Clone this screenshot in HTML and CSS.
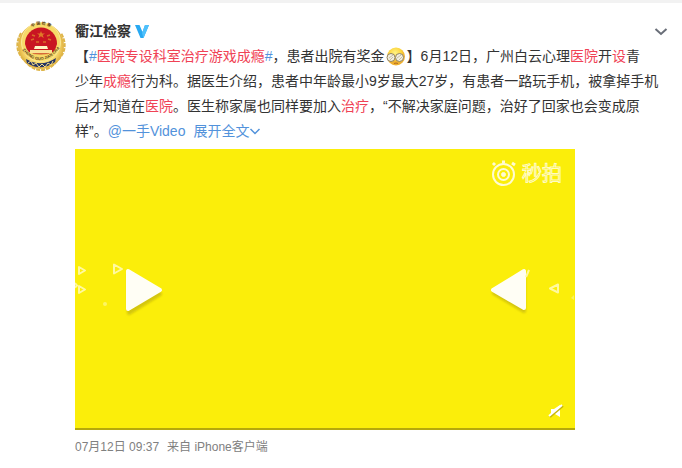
FILE: index.html
```html
<!DOCTYPE html>
<html lang="zh-CN">
<head>
<meta charset="utf-8">
<meta name="viewport" content="width=device-width, initial-scale=1">
<title>衢江检察</title>
<link rel="stylesheet" href="styles.css">
</head>
<body>
<article class="post">
  <a class="avatar" href="#" aria-label="衢江检察">
    <svg viewBox="0 0 50 50" width="50" height="50">
      <defs>
        <radialGradient id="gold"><stop offset="0.75" stop-color="#f8dc70"/><stop offset="1" stop-color="#e0b040"/></radialGradient>
        <path id="arc-top" d="M8.500 20a16.500 16.500 0 0 1 33 0"/>
        <path id="arc-bottom" d="M7 30Q25 49 43 28"/>
      </defs>
      <circle cx="25" cy="25" r="23" fill="url(#gold)"/>
      <path d="M5 12Q-4 28 9 40Q16 49 25 49Q34 49 41 40Q54 28 45 12" fill="none" stroke="#deb548" stroke-width="2" stroke-dasharray="4 1"/>
      <circle cx="25" cy="21" r="19.500" fill="#f7d968" stroke="#fbe996"/>
      <path d="M10 38q15 9 30-1l-1 4q-14 10-28 1z" fill="#243366"/>
      <path d="M12 42l3-2 2 4 3-2 3 4 3-3 3 3 3-4 3 2 2-4" fill="none" stroke="#f4dc83"/>
      <path d="M9 23a16 16.500 0 1 1 32 0q-1 5-4 8-12 5-24 0-3-3-4-8z" fill="#c91522"/>
      <path d="M25 10l1 2.500h3l-2.300 1.600 1 2.900-2.700-1.800-2.700 1.800 1-2.900L21 12.500h3z" fill="#e07b28"/>
      <path d="M16 14l3 1M15 19l3-1M31 15l3-1M32 18l3 1M20 21h3M27 21h3" stroke="#d96c29" stroke-width="1.500"/>
      <path d="M19 25h12l1 3H18z" fill="#fff4c4"/>
      <path d="M14 29h22v3H14z" fill="#f9e394"/>
      <path d="M18 33h14" stroke="#e4bb50"/>
      <text class="seal-name"><textPath href="#arc-top" startOffset="50%" text-anchor="middle">中 国 检 察</textPath></text>
      <text class="seal-latin"><textPath href="#arc-bottom" startOffset="50%" text-anchor="middle">ZHONG GUO JIAN CHA</textPath></text>
    </svg>
  </a>
  <div class="body">
    <header class="head">
      <a class="name" href="#">衢江检察</a>
      <svg class="badge" viewBox="0 0 14 13" width="14" height="13" aria-hidden="true"><path d="M0 0h4.500l3 7L10 0h4L8.500 13H5.500z" fill="#28a9f2"/><path d="M10 0h4L8.500 13 7 8z" fill="#4fc0fb"/></svg>
      <button class="more" type="button" aria-label="更多"><svg viewBox="0 0 14 8" width="14" height="8"><path d="M1.500 1l5.500 5 5.500-5" fill="none" stroke="#696e78" stroke-width="2"/></svg></button>
    </header>
    <p class="text">【<a href="#">#<em>医院专设科室治疗游戏成瘾</em>#</a>，患者出院有奖金<svg class="emoji" viewBox="0 0 22 22" width="22" height="22" aria-hidden="true"><defs><radialGradient id="face" cx="0.450" cy="0.300"><stop offset="0" stop-color="#fff384"/><stop offset="0.700" stop-color="#fcd43b"/><stop offset="1" stop-color="#eeb030"/></radialGradient></defs><circle cx="11" cy="10.500" r="9" fill="url(#face)"/><g fill="#f2efdf" stroke="#91815d"><circle cx="6" cy="11.500" r="4"/><circle cx="14.500" cy="11.500" r="4"/></g><path d="M4 12l4-3M5 14l3-3M12 12l4-3M14 14l3-3" stroke="#c5bda6"/><path d="M9 17.500q2-1 4 0" fill="none" stroke="#b36b20"/></svg>】6月12日，广州白云心理<em>医院</em>开<em>设</em>青<br>少年<em>成瘾</em>行为科。据医生介绍，患者中年龄最小9岁最大27岁，有患者一路玩手机，被拿掉手机<br>后才知道在<em>医院</em>。医生称家属也同样要加入<em>治疗</em>，“不解决家庭问题，治好了回家也会变成原<br>样”。<a href="#">@一手Video</a><a class="expand" href="#">展开全文<svg viewBox="0 0 12 8" width="12" height="8" aria-hidden="true"><path d="M1.500 1l4.500 4.500 4.500-4.500" fill="none" stroke="#5292db" stroke-width="1.500"/></svg></a></p>
    <div class="video">
      <svg class="cover" viewBox="0 0 500 279" role="img" aria-label="秒拍">
        <defs><filter id="soft" x="-20%" y="-20%" width="140%" height="150%"><feGaussianBlur stdDeviation="1.200"/></filter></defs>
        <g fill="#d4c60a" stroke="#d4c60a" stroke-width="4" stroke-linejoin="round" filter="url(#soft)">
          <path d="M54 126v38l31-19z"/><path d="M449 125v37l-30-18z"/>
        </g>
        <g fill="#fffef5" stroke="#fffef5" stroke-width="4" stroke-linejoin="round">
          <path d="M53 122v38l32-19z"/><path d="M449 122v37l-31-18z"/>
        </g>
        <g fill="none" stroke="#fff9a0" stroke-width="2" stroke-linejoin="round">
          <path d="M39 115.500v9l8-4.500z"/><path d="M4 118v7l6-3.500z"/><path d="M4 137v7l6-3.500z"/><path d="M0 134l2 2.500-2 2"/><path d="M483 135.500v8l-8-4z"/><path d="M454 121l-3 7"/>
        </g>
        <circle cx="30" cy="155" r="2" fill="#fcf565"/><path d="M499 146l-3 3 3 2z" fill="#fcf25b"/>
        <g fill="none" stroke="#fffbd1">
          <circle cx="428.500" cy="25.500" r="10.500" stroke-width="2"/><circle cx="428.500" cy="25.500" r="5.500" stroke-width="2"/><circle cx="428.500" cy="25.500" r="2" fill="#fffbd1"/>
          <path d="M427 13h3M418 16l2-2M437 14l3 2" stroke-width="3"/>
        </g>
        <text class="watermark" x="447" y="32">秒拍</text>
      </svg>
      <button class="mute" type="button" aria-label="静音"><svg viewBox="0 0 16 16" width="16" height="16"><path d="M3 6h3l6-4v12l-5-3H3z" fill="#fff"/><path d="M2 14L15 3" stroke="#c5b60b" stroke-width="2"/><path d="M1 13L14 2" stroke="#fff" stroke-width="2"/></svg></button>
    </div>
    <footer class="meta"><a href="#">07月12日 09:37</a><span>来自 <a href="#">iPhone客户端</a></span></footer>
  </div>
</article>
</body>
</html>
```
FILE: styles.css
```css
* {
  box-sizing: border-box;
}

body {
  margin: 0;
  border-top: 3px solid #f2f2f2;
  background: #fff;
  color: #333;
  font: 14px/25px "Liberation Sans", "Noto Sans CJK SC", sans-serif;
}

a {
  color: #5292db;
  text-decoration: none;
}

em {
  color: #f04255;
  font-style: normal;
}

button {
  display: flex;
  padding: 0;
  border: 0;
  background: none;
  cursor: pointer;
}

svg {
  display: block;
}

.post {
  display: flex;
  gap: 9px;
  padding: 16px 14px 16px 16px;
}

.avatar {
  flex: none;
  width: 50px;
  padding-top: 2px;
}

.seal-name {
  fill: #5c3d14;
  font-size: 4px;
  font-weight: bold;
}

.seal-latin {
  fill: #5c3d14;
  font-size: 4px;
  font-weight: bold;
}

.body {
  flex: 1;
  min-width: 0;
}

.head {
  display: flex;
  align-items: center;
  gap: 4px;
}

.name {
  color: #333;
  font-weight: bold;
}

.more {
  margin-left: auto;
}

.text {
  margin: 0;
  white-space: nowrap;
}

.emoji {
  display: inline-block;
  vertical-align: middle;
}

.expand {
  margin-left: 8px;
}

.expand svg {
  display: inline-block;
  vertical-align: middle;
}

.video {
  position: relative;
  max-width: 500px;
  margin-top: 5px;
  border-bottom: 2px solid #b5a80c;
  background: #fbee0a;
}

.cover {
  width: 100%;
  height: auto;
}

.watermark {
  fill: #fbee0a;
  stroke: #fffbc4;
  stroke-width: 1px;
  font-size: 20px;
}

.mute {
  position: absolute;
  right: 11px;
  bottom: 9px;
}

.meta {
  display: flex;
  gap: 8px;
  margin-top: 5px;
  color: #808080;
  font-size: 12px;
}

.meta a {
  color: #808080;
}
```
